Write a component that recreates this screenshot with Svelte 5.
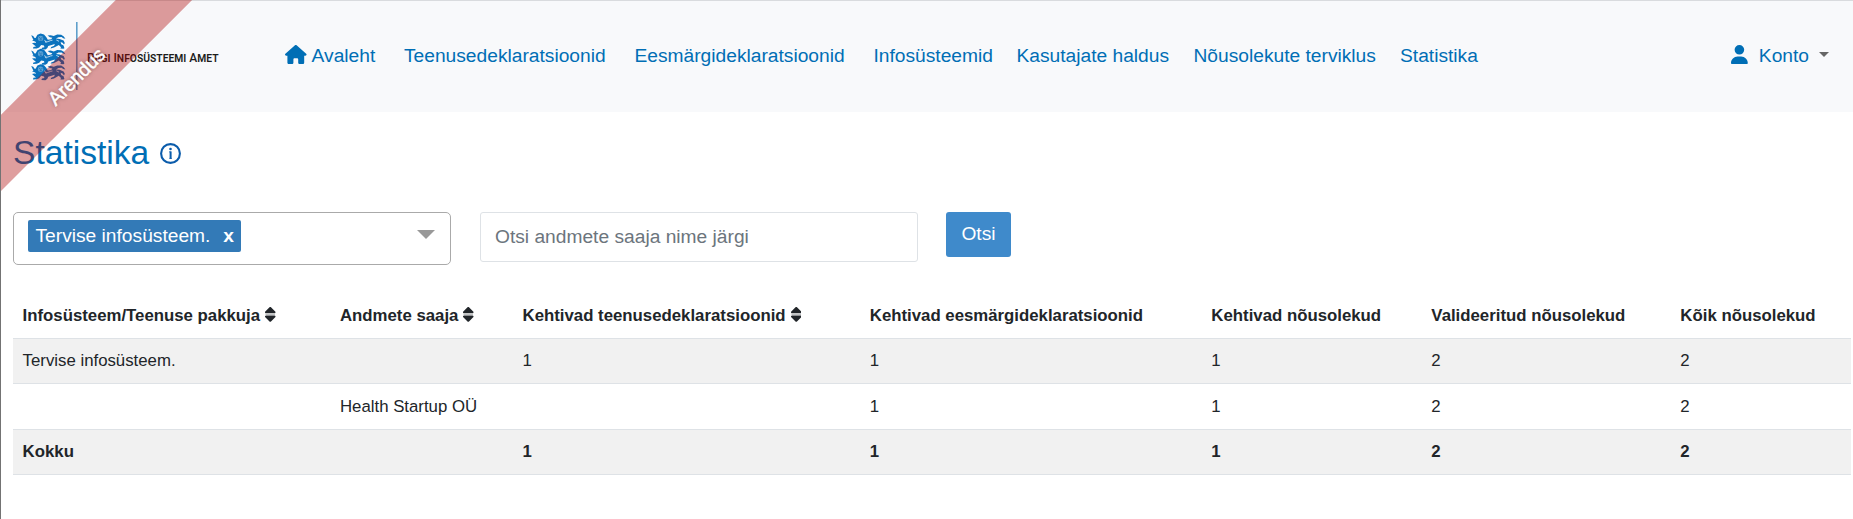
<script>
  const links = [
    { label: 'Teenusedeklaratsioonid', width: 230.5 },
    { label: 'Eesmärgideklaratsioonid', width: 239 },
    { label: 'Infosüsteemid', width: 143 },
    { label: 'Kasutajate haldus', width: 177 },
    { label: 'Nõusolekute terviklus', width: 206.5 },
    { label: 'Statistika', width: 90 }
  ];
  const columns = [
    { label: 'Infosüsteem/Teenuse pakkuja', width: 317.4, sort: true },
    { label: 'Andmete saaja', width: 182.6, sort: true },
    { label: 'Kehtivad teenusedeklaratsioonid', width: 347.2, sort: true },
    { label: 'Kehtivad eesmärgideklaratsioonid', width: 341.6 },
    { label: 'Kehtivad nõusolekud', width: 220 },
    { label: 'Valideeritud nõusolekud', width: 249 },
    { label: 'Kõik nõusolekud', width: 180.2 }
  ];
  const rows = [
    ['Tervise infosüsteem.', '', '1', '1', '1', '2', '2'],
    ['', 'Health Startup OÜ', '', '1', '1', '2', '2'],
    ['Kokku', '', '1', '1', '1', '2', '2']
  ];
</script>

<div class="page">
  <header>
    <svg class="logo" width="210" height="76" viewBox="0 0 210 76" aria-label="Riigi Infosüsteemi Amet">
      <defs>
        <g id="lion">
          <path fill="#0b72bd" d="M4.6 4.6 6.4 1.4 9.6 0l3.4 1 2.2 2.6 1.6 2.8 3.4-.6 1.2-1.4-2.6-.6-2.2-1.6 3-.4 3.2.8 3.4-1.4 4 .2 2.6 1.6 1.6 2.4-2.2-.6-1.6-1.2-3.2.2-2.4 1.4 3.6.4 4 1.6 1.2 2.4-.8 1.6-1.4-1.8-2-.8.6 2.2 2.4 1.2.8 2.8-1 .6-3-.2.6-1.4-2.2-2.2-1.8 1-3 1.6-3.4.8.6-1.4 3-1.2.6-1.8-3.2 1-3.4 1-.8 2-2 1.4-4-.1.6-1.5 2.4-.6-.4-1.6-2.8-.6-2 2.4-2.4 1-3.8.2.4-1.6 2.6-.4L1 9.8l2.2-.4 2 .2-1-1.4L1 7l1.4-.4-.8-1.8-1.4-3 2 .8 1.4 2z" />
          <circle cx="9.6" cy="5" r="2.7" fill="#5ba3d6" />
          <path d="M8.2 4.2h.9M10.5 4.2h.9M8.7 6.5h2.1M9.8 4.6v1" stroke="#0b62a8" stroke-width=".8" />
          <path d="M14.5 8.3c2.5.7 4.3-1.4 7-1.5M13.6 6.5l1.6 3M25.3 6.6l2.7 1.3" fill="none" stroke="#dcebf6" stroke-width=".8" />
        </g>
      </defs>
      <use href="#lion" x="11" y="11.4" />
      <use href="#lion" x="11" y="26.8" />
      <use href="#lion" x="11" y="42.2" />
      <path d="M56.8 0v68" stroke="#5f9fcb" stroke-width="1.6" />
      <text x="67" y="39.5" textLength="131.5" lengthAdjust="spacingAndGlyphs">Riigi Infosüsteemi Amet</text>
    </svg>
    <nav>
      <a class="home" href="#top">
        <svg width="21.6" height="19.2" viewBox="0 0 576 512"><path fill="currentColor" d="M575.8 255.5c0 18-15 32.1-32 32.1h-32l.7 160.2c0 2.7-.2 5.4-.5 8.1V472c0 22.1-17.9 40-40 40H456c-1.1 0-2.2 0-3.3-.1c-1.4 .1-2.8 .1-4.2 .1H416 392c-22.1 0-40-17.9-40-40V448 384c0-17.7-14.3-32-32-32H256c-17.7 0-32 14.3-32 32v64 24c0 22.1-17.9 40-40 40H160 128.1c-1.5 0-3-.1-4.5-.2c-1.2 .1-2.4 .2-3.6 .2H104c-22.1 0-40-17.9-40-40V360c0-.9 0-1.9 .1-2.8V287.6H32c-18 0-32-14-32-32.1c0-9 3-17 10-24L266.4 8c7-7 15-8 22-8s15 2 21 7L564.8 231.5c8 7 12 15 11 24z" /></svg>
        <span>Avaleht</span>
      </a>
      {#each links as link}
        <a href="#top" style="width: {link.width}px">{link.label}</a>
      {/each}
    </nav>
    <a class="account" href="#top">
      <svg width="16.8" height="19.2" viewBox="0 0 448 512"><path fill="currentColor" d="M224 256A128 128 0 1 0 224 0a128 128 0 1 0 0 256zm-45.7 48C79.8 304 0 383.8 0 482.3C0 498.7 13.3 512 29.7 512H418.3c16.4 0 29.7-13.3 29.7-29.7C448 383.8 368.2 304 269.7 304H178.3z" /></svg>
      <span>Konto</span>
      <i class="caret"></i>
    </a>
  </header>

  <main>
    <div class="title">
      <h1>Statistika</h1>
      <svg width="21" height="21" viewBox="0 0 21 21">
        <circle cx="10.5" cy="10.5" r="9.4" fill="none" stroke="#0b5cab" stroke-width="2.1" />
        <circle cx="10.5" cy="6" r="1.3" fill="#0b5cab" />
        <path d="M9.2 8.9h1.4M9.4 15.4h2.4" fill="none" stroke="#0b5cab" stroke-width=".9" />
        <path d="M10.6 8.4v7.4" stroke="#0b5cab" stroke-width="2" />
      </svg>
    </div>

    <form>
      <div class="select">
        <span class="chip">Tervise infosüsteem. <b>x</b></span>
        <i class="arrow"></i>
      </div>
      <input type="text" placeholder="Otsi andmete saaja nime järgi" />
      <button type="button">Otsi</button>
    </form>

    <table>
      <colgroup>
        {#each columns as col}<col style="width: {col.width}px" />{/each}
      </colgroup>
      <thead>
        <tr>
          {#each columns as col}
            <th>{col.label}{#if col.sort}<svg class="sort" width="10.5" height="16.8" viewBox="0 0 320 512"><path fill="currentColor" d="M137.4 41.4c12.5-12.5 32.8-12.5 45.3 0l128 128c9.2 9.2 11.9 22.9 6.9 34.9s-16.6 19.8-29.6 19.8H32c-12.9 0-24.6-7.8-29.6-19.8s-2.2-25.7 6.9-34.9l128-128zm0 429.3l-128-128c-9.2-9.2-11.9-22.9-6.9-34.9s16.6-19.8 29.6-19.8H288c12.9 0 24.6 7.8 29.6 19.8s2.2 25.7-6.9 34.9l-128 128c-12.5 12.5-32.8 12.5-45.3 0z" /><path d="M16 256h288" stroke="#adafb1" stroke-width="26" /></svg>{/if}</th>
          {/each}
        </tr>
      </thead>
      <tbody>
        {#each rows as row}
          <tr>{#each row as cell}<td>{cell}</td>{/each}</tr>
        {/each}
      </tbody>
    </table>
  </main>

  <div class="ribbon"><span>Arendus</span></div>
</div>

<style>
  :global(body) {
    background: #fff;
  }
  .page {
    position: relative;
    box-sizing: border-box;
    width: 1853px;
    height: 519px;
    overflow: hidden;
    border-left: 1px solid #737373;
    font: 19.2px/28.8px "Liberation Sans", Arial, sans-serif;
    color: #212529;
  }
  a {
    color: #006eb5;
    text-decoration: none;
    white-space: nowrap;
  }
  header {
    box-sizing: border-box;
    display: flex;
    align-items: flex-start;
    height: 112px;
    border-top: 1px solid #d9dbde;
    background: #f8f9fb;
  }
  .logo {
    flex: none;
    margin: 21px 0 0 19px;
    overflow: visible;
  }
  .logo text {
    font: 500 13.4px Roboto, sans-serif;
    font-variant: small-caps;
    fill: #1d1d1b;
  }
  nav {
    display: flex;
    margin: 41px 0 0 55px;
  }
  nav a {
    flex: none;
  }
  .home {
    display: flex;
    gap: 5px;
    width: 119px;
  }
  .home svg {
    margin-top: 2.5px;
  }
  .account {
    display: flex;
    margin: 41px 24px 0 auto;
  }
  .account svg {
    margin: 3px 11px 0 0;
  }
  .caret {
    width: 0;
    height: 0;
    margin: 10px 0 0 10px;
    border: 5.5px solid transparent;
    border-top-color: #666;
    border-bottom: 0;
  }
  main {
    padding: 0 1px 0 12px;
  }
  .title {
    display: flex;
    align-items: flex-start;
    height: 100px;
  }
  h1 {
    margin: 21px 11px 0 0;
    font-size: 33.6px;
    line-height: 40px;
    font-weight: 400;
    color: #006eb5;
  }
  .title svg {
    margin-top: 30.5px;
  }
  form {
    display: flex;
    align-items: flex-start;
    height: 81px;
  }
  .select {
    box-sizing: border-box;
    display: flex;
    align-items: flex-start;
    justify-content: space-between;
    width: 438px;
    height: 53px;
    padding: 7px 15px 0 14px;
    border: 1px solid #aaa;
    border-radius: 5px;
  }
  .chip {
    box-sizing: border-box;
    display: flex;
    justify-content: space-between;
    width: 213px;
    height: 32px;
    padding: 0 7px 0 7.5px;
    border-radius: 2px;
    background: #337ab7;
    color: #fff;
    line-height: 32px;
  }
  .arrow {
    margin-top: 10px;
    border: 9px solid transparent;
    border-top-color: #999;
    border-bottom: 0;
  }
  input {
    box-sizing: border-box;
    width: 438px;
    height: 50px;
    margin: 0 28px 0 29px;
    padding: 0 14px;
    border: 1px solid #dee2e6;
    border-radius: 3px;
    background: #fff;
    font: inherit;
  }
  input::placeholder {
    color: #6c757d;
    opacity: 1;
  }
  button {
    width: 65px;
    height: 45px;
    padding: 0;
    border: 0;
    border-radius: 3px;
    background: #3f8acb;
    color: #fff;
    font: inherit;
  }
  table {
    width: 1838px;
    table-layout: fixed;
    border-collapse: separate;
    border-spacing: 0;
    font-size: 16.8px;
    line-height: 25.2px;
  }
  th,
  td {
    box-sizing: border-box;
    height: 45.4px;
    padding: 9.2px 9.6px 9.6px;
    border-bottom: 1px solid #dee2e6;
    text-align: left;
    white-space: nowrap;
  }
  th {
    height: 45.8px;
    padding: 9.6px 9.6px 9.2px;
  }
  .sort {
    margin-left: 5px;
    vertical-align: -2px;
  }
  tbody tr:nth-child(odd) {
    background: #f1f1f1;
  }
  tbody tr:last-child {
    font-weight: 700;
  }
  .ribbon {
    position: absolute;
    top: 50px;
    left: -74px;
    display: flex;
    align-items: center;
    justify-content: center;
    width: 300px;
    height: 54.3px;
    background: rgba(170, 0, 0, 0.38);
    color: #fff;
    text-shadow: 0 0 4px rgba(0, 0, 0, 0.5);
    -webkit-text-stroke: 0.5px #fff;
    transform: rotate(-45deg);
  }
</style>
